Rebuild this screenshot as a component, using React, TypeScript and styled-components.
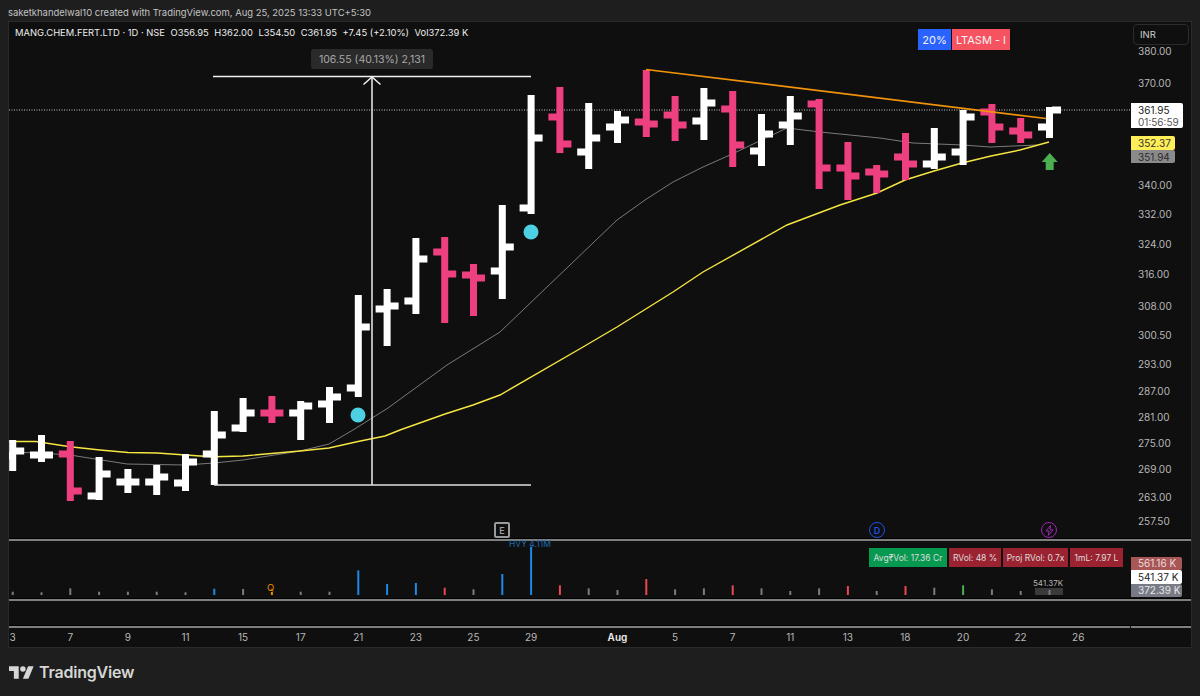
import React from "react";
import styled, { createGlobalStyle } from "styled-components";

type Bar = { high: number; low: number; open: number; close: number; pink?: boolean };
type VolumeBar = { top: number; color: string };

const GREY = "#787b86";
const BLUE = "#1e88e5";
const RED = "#e8484f";
const GREEN = "#4caf50";
const ORANGE = "#f08c00";

const barX = (n: number) => 12.7 + 28.8 * n;

const bars: Bar[] = [
  { high: 440, low: 471, open: 456, close: 451 },
  { high: 435, low: 462, open: 455, close: 455 },
  { high: 441, low: 501, open: 454, close: 491, pink: true },
  { high: 457, low: 500, open: 496, close: 474 },
  { high: 469, low: 493, open: 482, close: 482 },
  { high: 465, low: 495, open: 482, close: 477 },
  { high: 454, low: 491, open: 483, close: 462 },
  { high: 411, low: 485, open: 454, close: 435 },
  { high: 398, low: 432, open: 428, close: 413 },
  { high: 396, low: 423, open: 413, close: 413, pink: true },
  { high: 401, low: 440, open: 413, close: 406 },
  { high: 387, low: 423, open: 404, close: 397 },
  { high: 295, low: 397, open: 388, close: 327 },
  { high: 289, low: 346, open: 309, close: 306 },
  { high: 238, low: 314, open: 301, close: 259 },
  { high: 237, low: 323, open: 252, close: 274, pink: true },
  { high: 264, low: 316, open: 275, close: 278, pink: true },
  { high: 205, low: 299, open: 271, close: 247 },
  { high: 95, low: 214, open: 208, close: 138 },
  { high: 87, low: 153, open: 117, close: 144, pink: true },
  { high: 103, low: 169, open: 152, close: 138 },
  { high: 111, low: 143, open: 127, close: 120 },
  { high: 70, low: 137, open: 122, close: 124, pink: true },
  { high: 96, low: 141, open: 115, close: 125, pink: true },
  { high: 88, low: 140, open: 121, close: 103 },
  { high: 91, low: 167, open: 109, close: 145, pink: true },
  { high: 114, low: 166, open: 151, close: 134 },
  { high: 96, low: 145, open: 125, close: 116 },
  { high: 99, low: 189, open: 104, close: 168, pink: true },
  { high: 142, low: 200, open: 168, close: 176, pink: true },
  { high: 165, low: 193, open: 172, close: 174, pink: true },
  { high: 133, low: 180, open: 157, close: 164, pink: true },
  { high: 128, low: 169, open: 164, close: 157 },
  { high: 110, low: 165, open: 152, close: 117 },
  { high: 104, low: 143, open: 112, close: 127, pink: true },
  { high: 118, low: 143, open: 131, close: 135, pink: true },
  { high: 107, low: 138, open: 127, close: 110 },
];

const volumes: VolumeBar[] = [
  { top: 591.7, color: GREY },
  { top: 592.3, color: GREY },
  { top: 588.3, color: GREY },
  { top: 591.7, color: GREY },
  { top: 591.7, color: GREY },
  { top: 591.7, color: GREY },
  { top: 592.3, color: GREY },
  { top: 588.7, color: BLUE },
  { top: 589, color: GREY },
  { top: 592, color: ORANGE },
  { top: 591.7, color: GREY },
  { top: 591.7, color: GREY },
  { top: 570.3, color: BLUE },
  { top: 584, color: BLUE },
  { top: 583, color: BLUE },
  { top: 587.7, color: RED },
  { top: 589.3, color: GREY },
  { top: 574, color: BLUE },
  { top: 546.7, color: BLUE },
  { top: 585.3, color: RED },
  { top: 588.3, color: GREY },
  { top: 590, color: GREY },
  { top: 579, color: RED },
  { top: 589.3, color: GREY },
  { top: 588.3, color: GREY },
  { top: 585.3, color: RED },
  { top: 588.3, color: GREY },
  { top: 591, color: GREY },
  { top: 588.3, color: GREY },
  { top: 586, color: RED },
  { top: 591, color: GREY },
  { top: 586, color: RED },
  { top: 587.7, color: GREY },
  { top: 585.3, color: GREEN },
  { top: 589.3, color: GREY },
  { top: 591, color: GREY },
  { top: 590, color: GREY },
];

const priceTicks: [string, number][] = [
  ["380.00", 51],
  ["370.00", 83],
  ["340.00", 185],
  ["332.00", 214],
  ["324.00", 244],
  ["316.00", 274],
  ["308.00", 306],
  ["300.50", 335],
  ["293.00", 364],
  ["287.00", 391],
  ["281.00", 417],
  ["275.00", 443],
  ["269.00", 469],
  ["263.00", 497],
  ["257.50", 521],
];

const timeTicks: [string, number, boolean?][] = [
  ["3", 0],
  ["7", 2],
  ["9", 4],
  ["11", 6],
  ["15", 8],
  ["17", 10],
  ["21", 12],
  ["23", 14],
  ["25", 16],
  ["29", 18],
  ["Aug", 21, true],
  ["5", 23],
  ["7", 25],
  ["11", 27],
  ["13", 29],
  ["18", 31],
  ["20", 33],
  ["22", 35],
  ["26", 37],
];

const yellowLine =
  "8,441.5 36,441.5 70,446.7 100,450 128,452.5 157,453 200,456 214,456.7 243,456 300,451 329,448 358,441.5 385,436 400,430 445,414 473,405 500,395 583,347 617,327 673,292 703,272 787,225 840,205 877,193 905,180 934,171 962,163 991,156 1020,150 1049,142";
const greyLine =
  "8,452 40,453 70,455 127,464 185,465 214,463 243,460 300,451 329,444 353,430 388,408 447,365 500,332 617,220 645,200 673,182 703,167 730,155 787,128 820,132 880,138 913,143 963,145 990,147 1037,145";

const GlobalStyle = createGlobalStyle`
  html, body {
    margin: 0;
    padding: 0;
    background: #1e1e1e;
    font-family: Inter, "Liberation Sans", sans-serif;
  }
`;

const Page = styled.div`
  box-sizing: border-box;
  display: flex;
  flex-direction: column;
  width: 1200px;
  height: 696px;
  padding: 0 8px;
  background: #1e1e1e;
  overflow: hidden;
`;

const Attribution = styled.div`
  display: flex;
  align-items: center;
  height: 21px;
  padding-top: 3px;
  box-sizing: border-box;
  color: #c4c4c4;
  font-size: 9.45px;
  white-space: nowrap;
`;

const Frame = styled.div`
  box-sizing: border-box;
  display: grid;
  grid-template-rows: 519px 60px 27px 19px;
  height: 627px;
  background: #0f0f0f;
  border: 1px solid #2a2a2a;
`;

const Pane = styled.div`
  box-sizing: border-box;
  display: flex;
  position: relative;
  border-bottom: 2px solid #7e7e7e;
  box-shadow: inset 0 -1px 0 #000;
`;

const Plot = styled.div`
  position: relative;
  flex: 1;
  min-width: 0;
`;

const PriceAxis = styled.div`
  position: relative;
  width: 60px;
  flex: none;
`;

const Drawing = styled.svg`
  display: block;
  width: 100%;
  height: 100%;
`;

const Legend = styled.div`
  position: absolute;
  left: 6px;
  top: 4px;
  display: flex;
  gap: 5.5px;
  color: #ededed;
  font-size: 9.4px;
  line-height: 14px;
  white-space: nowrap;
`;

const MeasureTip = styled.div`
  position: absolute;
  left: 302px;
  top: 27px;
  box-sizing: border-box;
  width: 122px;
  height: 20px;
  display: flex;
  align-items: center;
  justify-content: center;
  border-radius: 3px;
  background: #2a2a2a;
  color: #a8a8a8;
  font-size: 10.5px;
`;

const Badges = styled.div`
  position: absolute;
  left: 909px;
  top: 7px;
  display: flex;
  gap: 1px;
`;

const Badge = styled.div<{ $bg: string; $width: number }>`
  box-sizing: border-box;
  width: ${(p) => p.$width}px;
  height: 21px;
  display: flex;
  align-items: center;
  justify-content: center;
  background: ${(p) => p.$bg};
  color: #f4f4f4;
  font-size: 11px;
`;

const EventMark = styled.div<{ $x: number; $color: string; $round?: boolean }>`
  position: absolute;
  left: ${(p) => p.$x - 9 - 8}px;
  top: 500px;
  box-sizing: border-box;
  width: 16px;
  height: 16px;
  display: flex;
  align-items: center;
  justify-content: center;
  border: ${(p) => (p.$round ? 1.5 : 2)}px solid ${(p) => p.$color};
  border-radius: ${(p) => (p.$round ? "50%" : "2px")};
  color: ${(p) => p.$color};
  font-size: 9px;
  font-weight: 600;
`;

const AxisPrice = styled.div<{ $y: number }>`
  position: absolute;
  left: 7px;
  top: ${(p) => p.$y - 22 - 7}px;
  color: #b8b8b8;
  font-size: 10px;
  line-height: 14px;
`;

const CurrencyButton = styled.div`
  position: absolute;
  left: 2px;
  top: 2px;
  box-sizing: border-box;
  width: 56px;
  height: 21px;
  padding-left: 6px;
  display: flex;
  align-items: center;
  border: 1px solid #2c2c2c;
  border-radius: 4px;
  background: #0f0f0f;
  color: #d0d0d0;
  font-size: 9.5px;
`;

const PriceFlag = styled.div<{ $top: number; $h: number; $w: number; $bg: string; $fg: string }>`
  position: absolute;
  left: 0;
  top: ${(p) => p.$top}px;
  box-sizing: border-box;
  width: ${(p) => p.$w}px;
  height: ${(p) => p.$h}px;
  padding-left: 7px;
  display: flex;
  flex-direction: column;
  justify-content: center;
  background: ${(p) => p.$bg};
  color: ${(p) => p.$fg};
  border-radius: 0 2px 2px 0;
  font-size: 10px;
  line-height: 12px;
  white-space: nowrap;
`;

const Countdown = styled.span`
  color: #555;
`;

const VolumeTable = styled.div`
  position: absolute;
  right: 8px;
  top: 7px;
  display: flex;
  gap: 2px;
`;

const VolumeCell = styled.div<{ $bg: string; $width: number }>`
  box-sizing: border-box;
  width: ${(p) => p.$width}px;
  height: 19px;
  display: flex;
  align-items: center;
  justify-content: center;
  background: ${(p) => p.$bg};
  color: #dcdcdc;
  font-size: 8.5px;
  white-space: nowrap;
`;

const HeavyLabel = styled.div`
  position: absolute;
  left: 500px;
  top: -2px;
  color: #1c6cae;
  font-size: 8.5px;
  line-height: 10px;
  white-space: nowrap;
`;

const OrderMark = styled.div`
  position: absolute;
  left: 258px;
  top: 41px;
  color: ${ORANGE};
  font-size: 9.5px;
  line-height: 11px;
`;

const LastVolume = styled.div`
  position: absolute;
  left: 1024px;
  top: 37px;
  color: #b4b4b4;
  font-size: 8px;
  line-height: 10px;
  white-space: nowrap;
`;

const TimeAxis = styled.div`
  display: grid;
  grid-template-columns: repeat(38, 28.8px);
  align-items: center;
  margin-left: -10.7px;
  overflow: visible;
`;

const TimeLabel = styled.div<{ $column: number; $strong?: boolean }>`
  grid-column: ${(p) => p.$column + 1};
  justify-self: center;
  color: ${(p) => (p.$strong ? "#f0f0f0" : "#b8b8b8")};
  font-size: 10px;
  font-weight: ${(p) => (p.$strong ? 600 : 400)};
  line-height: 19px;
`;

const AxisNotch = styled.div`
  position: absolute;
  right: 60px;
  bottom: -2px;
  width: 1px;
  height: 2px;
  background: #0f0f0f;
`;

const Footer = styled.div`
  flex: 1;
  display: flex;
  align-items: center;
  gap: 5px;
  padding-left: 1px;
`;

const Wordmark = styled.span`
  color: #d6d6d6;
  font-size: 16px;
  font-weight: 600;
  letter-spacing: -0.2px;
`;

function Candle({ bar, x }: { bar: Bar; x: number }) {
  const fill = bar.pink ? "#ee4080" : "#ffffff";
  return (
    <g fill={fill}>
      <rect x={x - 3.5} y={bar.high} width={7} height={bar.low - bar.high} />
      <rect x={x - 11.5} y={bar.open - 3.5} width={9} height={7} />
      <rect x={x + 2.5} y={bar.close - 3.5} width={9} height={7} />
    </g>
  );
}

function MainChart() {
  return (
    <Drawing viewBox="9 22 1122 517" preserveAspectRatio="none">
      <line x1={9} y1={110} x2={1131} y2={110} stroke="#c8c8c8" strokeWidth={1} strokeDasharray="1 1.5" />
      <polyline points={greyLine} fill="none" stroke="#7a7a7a" strokeWidth={1} />
      <polyline points={yellowLine} fill="none" stroke="#f5e642" strokeWidth={1.4} />
      {bars.map((bar, n) => (
        <Candle key={n} bar={bar} x={barX(n)} />
      ))}
      <line x1={213} y1={76.5} x2={531} y2={76.5} stroke="#f0f0f0" strokeWidth={1.6} />
      <line x1={214} y1={485} x2={531} y2={485} stroke="#e0e0e0" strokeWidth={1.6} />
      <line x1={372} y1={77} x2={372} y2={485} stroke="#e0e0e0" strokeWidth={1.6} />
      <polyline points="363.5,84.5 372,77 380.5,84.5" fill="none" stroke="#f0f0f0" strokeWidth={1.5} />
      <line x1={646} y1={69.5} x2={1046} y2={118.5} stroke="#f0920c" strokeWidth={1.7} />
      <circle cx={358} cy={415} r={7.5} fill="#4dd0e1" />
      <circle cx={531} cy={232} r={7.5} fill="#4dd0e1" />
      <polygon points="1049.7,153 1057.7,162 1053.7,162 1053.7,170 1045.7,170 1045.7,162 1041.7,162" fill={GREEN} />
    </Drawing>
  );
}

function VolumeChart() {
  return (
    <Drawing viewBox="9 541 1122 58" preserveAspectRatio="none">
      <rect x={1035} y={588} width={28} height={7} fill="#3a3a3a" />
      {volumes.map((v, n) => (
        <rect key={n} x={barX(n) - 1} y={v.top} width={2} height={595 - v.top} fill={v.color} />
      ))}
    </Drawing>
  );
}

export default function App() {
  return (
    <Page>
      <GlobalStyle />
      <Attribution>saketkhandelwal10 created with TradingView.com, Aug 25, 2025 13:33 UTC+5:30</Attribution>
      <Frame>
        <Pane>
          <Plot>
            <MainChart />
            <Legend>
              <span>MANG.CHEM.FERT.LTD · 1D · NSE</span>
              <span>O356.95</span>
              <span>H362.00</span>
              <span>L354.50</span>
              <span>C361.95</span>
              <span>+7.45 (+2.10%)</span>
              <span>Vol372.39 K</span>
            </Legend>
            <MeasureTip>106.55 (40.13%) 2,131</MeasureTip>
            <Badges>
              <Badge $bg="#2962ff" $width={33}>20%</Badge>
              <Badge $bg="#f7525f" $width={58}>LTASM - I</Badge>
            </Badges>
            <EventMark $x={502} $color="#9a9a9a">E</EventMark>
            <EventMark $x={877} $color="#1e53e5" $round>D</EventMark>
            <EventMark $x={1049} $color="#9c27b0" $round>
              <svg width="9" height="11" viewBox="0 0 9 11">
                <path d="M5.5 0.5 1 6h3l-.7 4.5L8 4.8H5z" fill="none" stroke="#9c27b0" strokeWidth="1" />
              </svg>
            </EventMark>
          </Plot>
          <PriceAxis>
            {priceTicks.map(([label, y]) => (
              <AxisPrice key={label} $y={y}>{label}</AxisPrice>
            ))}
            <CurrencyButton>INR</CurrencyButton>
            <PriceFlag $top={81} $h={25} $w={52} $bg="#ffffff" $fg="#222">
              <span>361.95</span>
              <Countdown>01:56:59</Countdown>
            </PriceFlag>
            <PriceFlag $top={114} $h={14} $w={44} $bg="#ffee58" $fg="#333">352.37</PriceFlag>
            <PriceFlag $top={128} $h={13} $w={44} $bg="#8a8a8a" $fg="#2a2a2a">351.94</PriceFlag>
          </PriceAxis>
        </Pane>
        <Pane>
          <Plot>
            <VolumeChart />
            <HeavyLabel>HVY 4.11M</HeavyLabel>
            <OrderMark>Q</OrderMark>
            <LastVolume>541.37K</LastVolume>
            <VolumeTable>
              <VolumeCell $bg="#089950" $width={78}>Avg₹Vol: 17.36 Cr</VolumeCell>
              <VolumeCell $bg="#9b2331" $width={52}>RVol: 48 %</VolumeCell>
              <VolumeCell $bg="#9b2331" $width={65}>Proj RVol: 0.7x</VolumeCell>
              <VolumeCell $bg="#9b2331" $width={53}>1mL: 7.97 L</VolumeCell>
            </VolumeTable>
          </Plot>
          <PriceAxis>
            <PriceFlag $top={15.7} $h={13.5} $w={51} $bg="#a85656" $fg="#ecdcdc">561.16 K</PriceFlag>
            <PriceFlag $top={29} $h={14} $w={51} $bg="#ffffff" $fg="#222">541.37 K</PriceFlag>
            <PriceFlag $top={42.7} $h={13.5} $w={51} $bg={GREY} $fg="#e6e6e6">372.39 K</PriceFlag>
          </PriceAxis>
        </Pane>
        <Pane>
          <AxisNotch />
        </Pane>
        <TimeAxis>
          {timeTicks.map(([label, column, strong]) => (
            <TimeLabel key={column} $column={column} $strong={strong}>{label}</TimeLabel>
          ))}
        </TimeAxis>
      </Frame>
      <Footer>
        <svg width="25" height="15" viewBox="0 3 36 20">
          <path d="M14 22H7V11H0V4h14v18zM28 22h-8l7.5-18h8L28 22z" fill="#d6d6d6" />
          <circle cx="20" cy="8" r="4" fill="#d6d6d6" />
        </svg>
        <Wordmark>TradingView</Wordmark>
      </Footer>
    </Page>
  );
}
